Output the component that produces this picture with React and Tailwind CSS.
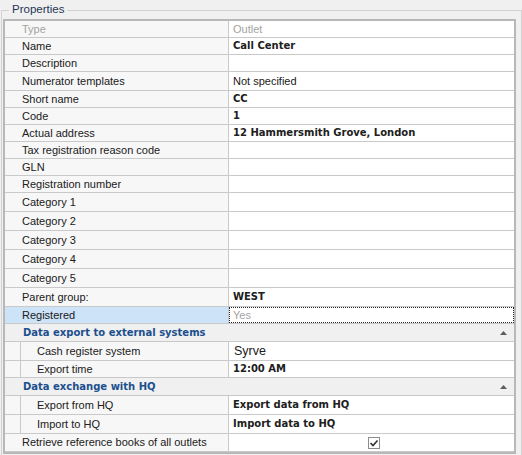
import React from "react";

const rows = [
  { label: "Type", value: "Outlet", h: "h-[17px]", kind: "disabled" },
  { label: "Name", value: "Call Center", h: "h-[17px]", bold: true },
  { label: "Description", h: "h-[17px]" },
  { label: "Numerator templates", value: "Not specified", h: "h-[19px]" },
  { label: "Short name", value: "CC", h: "h-[17px]", bold: true },
  { label: "Code", value: "1", h: "h-[17px]", bold: true },
  { label: "Actual address", value: "12 Hammersmith Grove, London", h: "h-[17px]", bold: true },
  { label: "Tax registration reason code", h: "h-[17px]" },
  { label: "GLN", h: "h-[17px]" },
  { label: "Registration number", h: "h-[17px]" },
  { label: "Category 1", h: "h-[19px]" },
  { label: "Category 2", h: "h-[19px]" },
  { label: "Category 3", h: "h-[19px]" },
  { label: "Category 4", h: "h-[19px]" },
  { label: "Category 5", h: "h-[19px]" },
  { label: "Parent group:", value: "WEST", h: "h-[19px]", bold: true },
  { label: "Registered", value: "Yes", h: "h-[17px]", kind: "selected" },
  { header: "Data export to external systems", h: "h-[18px]" },
  { label: "Cash register system", value: "Syrve", h: "h-[19px]", sub: true, big: true },
  { label: "Export time", value: "12:00 AM", h: "h-[17px]", sub: true, bold: true },
  { header: "Data exchange with HQ", h: "h-[18px]" },
  { label: "Export from HQ", value: "Export data from HQ", h: "h-[19px]", sub: true, bold: true },
  { label: "Import to HQ", value: "Import data to HQ", h: "h-[19px]", sub: true, bold: true },
  { label: "Retrieve reference books of all outlets", h: "h-[18px]", check: true },
];

const boldFont = { fontFamily: '"DejaVu Sans", Verdana, sans-serif' };

function Collapse() {
  return (
    <svg width="7" height="4" viewBox="0 0 7 4">
      <path d="M3.5 0 L7 4 L0 4 Z" fill="#5c5c5c" />
    </svg>
  );
}

function Check() {
  return (
    <svg width="12" height="12" viewBox="0 0 12 12">
      <rect x="0.5" y="0.5" width="11" height="11" fill="#fff" stroke="#8c8c8c" />
      <path d="M2.5 6 L5 8.5 L9.5 3.5" fill="none" stroke="#303030" strokeWidth="1.6" />
    </svg>
  );
}

function Row({ r }) {
  if (r.header) {
    return (
      <div className={`${r.h} flex items-center justify-between border-b border-[#c9c9c9] bg-[#f0f0f0] pl-[18px] pr-[7px]`}>
        <span className="font-bold text-[10px] text-[#1b4f8e]" style={boldFont}>
          {r.header}
        </span>
        <Collapse />
      </div>
    );
  }
  const disabled = r.kind === "disabled";
  const selected = r.kind === "selected";
  return (
    <div className={`${r.h} flex border-b border-[#c9c9c9]`}>
      <div
        className={`w-[224px] shrink-0 flex border-r border-[#c9c9c9] ${
          selected ? "bg-[#cde3f7]" : "bg-[#f7f7f7]"
        }`}
      >
        {r.sub && <div className="w-[16px] shrink-0 border-r border-[#c9c9c9]" />}
        <div
          className={`flex items-center ${r.sub ? "pl-[16px]" : "pl-[17px]"} whitespace-nowrap ${
            disabled ? "text-[#a3a3a3]" : "text-[#202020]"
          }`}
        >
          {r.label}
        </div>
      </div>
      <div
        className={`flex-1 flex items-center bg-white whitespace-nowrap ${
          selected ? "outline-1 outline-dotted outline-[#222] -outline-offset-1 text-[#a3a3a3]" : ""
        } ${disabled ? "text-[#a3a3a3]" : "text-[#202020]"} ${r.bold ? "font-bold text-[10px]" : ""} ${
          r.big ? "text-[12.5px] pl-[5px] text-[#111]" : "pl-[4px]"
        } ${r.check ? "justify-center pl-0" : ""}`}
        style={r.bold ? boldFont : undefined}
      >
        {r.check ? <Check /> : r.value}
      </div>
    </div>
  );
}

export default function App() {
  return (
    <div
      className="w-[522px] h-[455px] overflow-hidden bg-[#f0f0f0] pt-[10px] pl-[1px] text-[11px] leading-none"
      style={{ fontFamily: '"Liberation Sans", Arial, sans-serif' }}
    >
      <div className="relative h-[460px] border-t border-l border-r border-[#d2d2d2] pt-[8px] pl-[1px] pr-[5px]">
        <span className="absolute left-[7px] -top-[8px] h-[14px] px-[3px] bg-[#f0f0f0] flex items-center text-[11.5px] text-[#1e3555]">
          Properties
        </span>
        <div className="border-2 border-[#b8b8b8] bg-white">
          {rows.map((r, i) => (
            <Row key={i} r={r} />
          ))}
        </div>
      </div>
    </div>
  );
}
